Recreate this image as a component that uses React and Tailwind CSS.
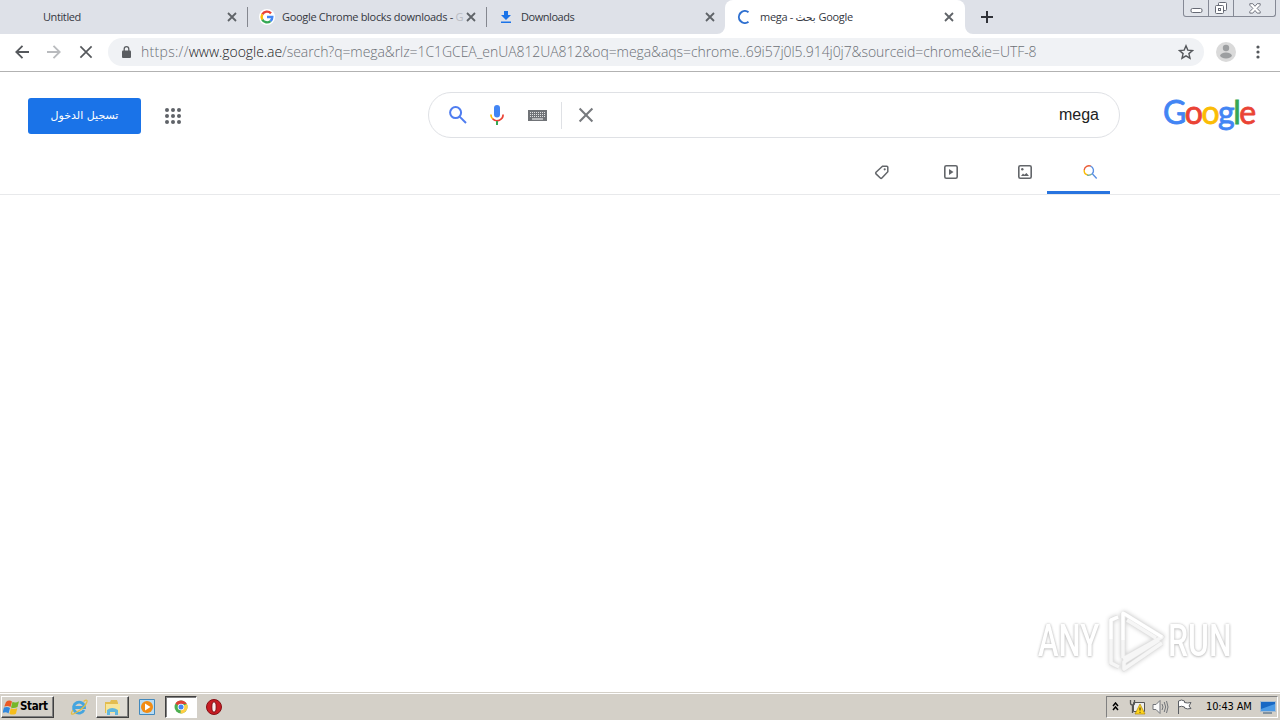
import React from "react";

const Close = ({ className = "", size = 10, width = 1.8 }) => (
  <svg className={"shrink-0 " + className} width={size} height={size} viewBox="0 0 10 10" fill="none" stroke="currentColor" strokeWidth={width}>
    <path d="M1 1l8 8M9 1l-8 8" />
  </svg>
);

const GoogleG = () => (
  <svg width="16" height="16" viewBox="0 0 16 16" className="shrink-0" fill="none" strokeWidth="2.4">
    <circle cx="8" cy="8" r="8" fill="#fff" />
    <path d="M12 4.4A5.4 5.4 0 0 0 3.3 5.4" stroke="#ea4335" />
    <path d="M3.3 5.4a5.4 5.4 0 0 0 0 5.2" stroke="#fbbc05" />
    <path d="M3.3 10.6a5.4 5.4 0 0 0 8.2 1.5" stroke="#34a853" />
    <path d="M11.5 12.1A5.4 5.4 0 0 0 13.3 8H8" stroke="#4285f4" />
  </svg>
);

const tabText = "font-[Open_Sans,Noto_Sans,sans-serif] text-[11px] leading-[16px] whitespace-nowrap";

function TabStrip() {
  return (
    <div className="flex h-[34px] w-full bg-[#dee1e8] text-[#35383f]">
      <div className="flex w-[247px] items-center pl-[43px] pr-[10px]">
        <span className={tabText + " flex-1 tracking-[-0.4px]"}>Untitled</span>
        <Close className="text-[#5f6368]" />
      </div>
      <div className="mt-[7px] h-5 w-px bg-[#84878f]" />
      <div className="flex w-[238px] items-center pl-[11px] pr-[10px]">
        <GoogleG />
        <span className={tabText + " ml-[7px] w-[180px] tracking-[-0.31px]"}>Google Chrome blocks downloads - <span className="text-[#b9bcc3]">G</span></span>
        <Close className="ml-auto text-[#5f6368]" />
      </div>
      <div className="mt-[7px] h-5 w-px bg-[#84878f]" />
      <div className="flex w-[238px] items-center pl-[14px] pr-[10px]">
        <svg width="10" height="12" viewBox="0 0 10 12" fill="#1a73e8"><path d="M3 0h4v4h3L5 9 0 4h3zM0 10.500h10V12H0z" /></svg>
        <span className={tabText + " ml-[10px] flex-1 tracking-[-0.45px]"}>Downloads</span>
        <Close className="text-[#5f6368]" />
      </div>
      <div className="relative flex w-[240px] items-center rounded-t-[8px] bg-white pl-[12px] pr-[11px]">
        <svg className="absolute bottom-0 -left-2" width="8" height="8"><path d="M8 0v8H0a8 8 0 0 0 8-8" fill="#fff" /></svg>
        <svg className="absolute bottom-0 -right-2" width="8" height="8"><path d="M0 0v8h8a8 8 0 0 1-8-8" fill="#fff" /></svg>
        <svg width="14" height="14" viewBox="0 0 14 14" fill="none" stroke="#2f70d0" strokeWidth="2"><path d="M11.500 2.200A6 6 0 1 0 11.500 11.800" /></svg>
        <span className={tabText + " ml-[9px] flex-1 tracking-[-0.3px]"}>mega - <span className="font-[DejaVu_Sans,sans-serif] text-[10.5px]">بحث</span> Google</span>
        <Close className="text-[#5f6368]" />
      </div>
      <svg className="mt-[11px] ml-[16px] text-[#303238]" width="12" height="12" viewBox="0 0 12 12" stroke="currentColor" strokeWidth="2"><path d="M6 0v12M0 6h12" /></svg>
      <div className="ml-auto mr-[4px] flex h-[17px] w-[93px] rounded-b-[3px] border border-t-0 border-[#858995] bg-[#e1e4ea] text-[#666a75]">
        <div className="flex w-[25px] justify-center border-r border-[#858995] pt-2"><svg width="13" height="5"><rect x="1" y=".5" width="11" height="4" rx="1.5" fill="#fff" stroke="currentColor" /></svg></div>
        <div className="flex w-[25px] justify-center border-r border-[#858995] pt-[2px]"><svg width="14" height="13" fill="#fff" stroke="currentColor"><rect x="4.5" y=".5" width="8" height="8" rx="1" /><rect x="1.500" y="3.500" width="8" height="8" rx="1" /><rect x="4.500" y="6.500" width="2" height="2" /></svg></div>
        <div className="flex flex-1 justify-center pt-[3px]"><svg width="12" height="11" fill="#fff" stroke="currentColor" strokeWidth=".9"><path d="M.8.7h3L6 3.300 8.200.7h3v1.500L8.100 5.400l3.100 3.200v1.500h-3L6 7.500l-2.200 2.600h-3V8.600l3.100-3.200L.8 2.200z" /></svg></div>
      </div>
    </div>
  );
}

function Toolbar() {
  return (
    <div className="flex h-[38px] w-full items-center border-b border-[#b2b2b2] bg-white pb-px pl-[15px]">
      <svg className="text-[#55585c]" width="14" height="14" viewBox="0 0 14 14" fill="none" stroke="currentColor" strokeWidth="1.8"><path d="M14 7H1.500M7.500.8L1.300 7l6.200 6.200" /></svg>
      <svg className="ml-[18px] text-[#b9bbbe]" width="14" height="14" viewBox="0 0 14 14" fill="none" stroke="currentColor" strokeWidth="1.800"><path d="M0 7h12.500M6.500.8L12.700 7l-6.200 6.200" /></svg>
      <Close className="ml-[18px] text-[#55585c]" size={14} width={1.2} />
      <div className="ml-[15px] flex h-7 w-[1096px] items-center rounded-full bg-[#f0f2f5] pl-[14px] pr-[10px]">
        <svg width="9" height="12" viewBox="0 0 9 12"><rect y="4.500" width="9" height="7.500" rx="1" fill="#5a5d61" /><path d="M2.200 5V3a2.300 2.300 0 0 1 4.600 0v2" fill="none" stroke="#5a5d61" strokeWidth="1.300" /></svg>
        <div className="ml-[10px] flex-1 whitespace-nowrap font-[Open_Sans,Noto_Sans,sans-serif] text-[14px] font-light leading-5 tracking-[-0.07px] text-[#6c7076]"><span className="tracking-[0.3px]">https://</span><span className="tracking-[-0.05px] text-[#202124]">www.google.ae</span>/search?q=mega&amp;rlz=1C1GCEA_enUA812UA812&amp;oq=mega&amp;aqs=chrome..69i57j0l5.914j0j7&amp;sourceid=chrome&amp;ie=UTF-8</div>
        <svg width="16" height="16" viewBox="0 0 16 16" fill="none" stroke="#55585c" strokeWidth="1.400"><path d="M8 1.800l1.800 4.300 4.700.4-3.600 3.100 1.100 4.600L8 11.800l-4 2.400 1.100-4.600-3.600-3.100 4.700-.4z" /></svg>
      </div>
      <svg className="ml-[12px]" width="20" height="20" viewBox="0 0 20 20"><circle cx="10" cy="10" r="10" fill="#dadada" /><circle cx="10" cy="6" r="3.200" fill="#9c9ea0" /><ellipse cx="10" cy="13.500" rx="5.800" ry="3" fill="#9c9ea0" /></svg>
      <svg className="ml-[20px]" width="4" height="14" fill="#55585c"><circle cx="2" cy="2" r="1.600" /><circle cx="2" cy="7" r="1.600" /><circle cx="2" cy="12" r="1.600" /></svg>
    </div>
  );
}

function SearchHeader() {
  return (
    <header className="flex h-[123px] flex-col border-b border-[#e8e9eb] bg-white">
      <div className="flex h-[87px] items-center pb-px">
        <button className="ml-[28px] mt-[2px] h-9 w-[113px] rounded-[3px] bg-[#1a73e8] font-[DejaVu_Sans,sans-serif] text-[11px] leading-[34px] text-white" dir="rtl"><span className="inline-block tracking-normal">تسجيل الدخول</span></button>
        <svg className="ml-[24px] mt-px" width="16" height="16" viewBox="0 0 16 16" fill="#5f6368">
          {[2, 8, 14].map((y) => [2, 8, 14].map((x) => <circle key={x + "-" + y} cx={x} cy={y} r="2" />))}
        </svg>
        <div className="ml-[247px] flex h-[46px] w-[692px] items-center rounded-full border border-[#dfe1e5] pl-[20px] pr-[20px]">
          <svg width="18" height="18" viewBox="0 0 18 18" fill="none" stroke="#4f7df0" strokeWidth="2"><circle cx="6.600" cy="6.600" r="5.500" /><path d="M10.600 10.600l6.400 6.400" /></svg>
          <svg className="ml-[23px]" width="14" height="20" viewBox="0 0 14 20" fill="none" strokeWidth="1.700"><rect x="4" y="0" width="6" height="12.500" rx="3" fill="#4285f4" /><path d="M.9 9.500A6.200 6.200 0 0 0 2.800 14" stroke="#fbbc05" /><path d="M2.700 13.900A6.100 6.100 0 0 0 13.100 9.500" stroke="#ea4335" /><path d="M7 16v4" stroke="#34a853" strokeWidth="2" /></svg>
          <svg className="ml-[24px]" width="19" height="11" viewBox="0 0 19 11"><path d="M0 0h19v11H0z" fill="#707377" />{[2, 4, 6].map((y) => <path key={y} d={`M2 ${y}.500h15`} stroke="#fff" strokeWidth=".8" strokeDasharray="1 1" />)}<path d="M4 9h11" stroke="#fff" /></svg>
          <div className="ml-[14px] h-[27px] w-px bg-[#dfe1e5]" />
          <Close className="ml-[16px] text-[#777a7e]" size={16} width={1.3} />
          <span className="ml-auto font-[Liberation_Sans,Arial,sans-serif] text-[16px] leading-6 text-[#222]">mega</span>
        </div>
        <div className="mb-[7px] ml-[43px] flex h-[42px] font-[Lato,sans-serif] text-[32px] leading-[42px] tracking-[-1.55px] text-[#4285f4] [-webkit-text-stroke:0.8px_currentColor]" aria-label="Google">
          <span>G</span><span className="text-[#ea4335]">o</span><span className="text-[#fbbc05]">o</span><span>g</span><span className="text-[#34a853]">l</span><span className="text-[#ea4335]">e</span>
        </div>
      </div>
      <nav className="flex h-[35px] text-[#63666a]">
        <svg className="ml-[874px] mt-[5px]" width="16" height="16" viewBox="0 0 16 16" fill="none" stroke="currentColor" strokeWidth="1.500"><path d="M8.500 2.300h4.300q1 0 1 1v4.400L7.900 14q-.8.800-1.600 0L2 9.900q-.7-.8 0-1.600z" /><circle cx="10.700" cy="5.300" r="1.100" fill="currentColor" stroke="none" /></svg>
        <svg className="ml-[54px] mt-[6px]" width="14" height="14" viewBox="0 0 14 14"><rect x=".8" y=".8" width="12.400" height="12.400" rx="1.500" fill="none" stroke="currentColor" strokeWidth="1.600" /><path d="M5 4v6l4.500-3z" fill="currentColor" /></svg>
        <svg className="ml-[60px] mt-[6px]" width="14" height="14" viewBox="0 0 14 14"><rect x=".8" y=".8" width="12.400" height="12.400" rx="1.500" fill="none" stroke="currentColor" strokeWidth="1.600" /><circle cx="4.300" cy="4.300" r="1.200" fill="currentColor" /><path d="M3 11l2-2.500 1.300 1.300L8.500 8l2.500 3z" fill="currentColor" /></svg>
        <div className="ml-[15px] h-[35px] w-[63px] border-b-[3px] border-[#2874df] pl-[36px] pt-[6px]">
          <svg width="15" height="15" viewBox="0 0 15 15" fill="none" strokeWidth="1.400"><path d="M1.200 5A4.800 4.800 0 0 1 8 1.200" stroke="#ea5b35" /><path d="M1.200 5A4.800 4.800 0 0 0 5 10.100" stroke="#fbbc05" /><path d="M4.200 10A4.800 4.800 0 0 0 8.800 9" stroke="#79ad9b" /><path d="M7.500 1.100A4.800 4.800 0 0 1 9.300 8.700l4.400 4.700" stroke="#5b91e4" /></svg>
        </div>
      </nav>
    </header>
  );
}

function Watermark() {
  const letters = "font-[Roboto,sans-serif] font-medium text-[45px] leading-[60px] text-white inline-block [text-shadow:0_0_3px_#bbb,0_1px_3px_#ccc] origin-left";
  return (
    <div className="ml-auto mr-[42px] flex h-[66px] w-[200px] items-center">
      <div className="w-[71px] shrink-0 whitespace-nowrap"><span className={letters + " scale-x-[0.69]"}>ANY</span></div>
      <svg className="shrink-0 drop-shadow-[0_0_2px_#ccc]" width="57" height="64" viewBox="0 0 57 64" fill="none" strokeLinejoin="round">
        <path d="M9 8L2 11V54L10 58M14 4V49M14 4L53 28L14 50M53 34L15 60V53L50 31M18 11L47 29" stroke="#e2e2e2" strokeWidth="5" />
        <path d="M9 8L2 11V54L10 58M14 4V49M14 4L53 28L14 50M53 34L15 60V53L50 31M18 11L47 29" stroke="#f6f6f6" strokeWidth="3.400" />
        <path d="M9 8L2 11V30M14 31V4L53 28" stroke="#fff" strokeWidth="3" />
      </svg>
      <div className="ml-[2px] w-[70px] shrink-0 whitespace-nowrap"><span className={letters + " scale-x-[0.71]"}>RUN</span></div>
    </div>
  );
}

function Taskbar() {
  const raised = "border border-t-white border-l-white border-r-[#404040] border-b-[#404040] shadow-[inset_-1px_-1px_0_#808080]";
  return (
    <div className="flex h-[28px] w-full border-t border-[#d4d0c8] bg-[#d4d0c8] shadow-[inset_0_1px_0_#fff] pt-[3px] font-[DejaVu_Sans_Condensed,DejaVu_Sans,sans-serif] text-black">
      <div className={"ml-[1px] flex h-[22px] w-[53px] items-center pl-px " + raised}>
        <svg className="shrink-0" width="17" height="17" viewBox="0 0 17 17"><path d="M3 3q3-2.500 6-.5L7.500 8q-2.500-2-6.200-.4z" fill="#eb5a25" /><path d="M9.500 2.800q3 1.500 6.500-.6L14.500 8Q10.500 10 8 8.400z" fill="#76b72a" /><path d="M1 8.500q3.500-1.400 6 .4l-1.500 5.500q-2.500-2-6-.5z" fill="#3188dd" /><path d="M7.800 9.300q3 1.600 6.500 0l-1.400 5.400q-3.500 1.800-6.500 0z" fill="#f5bd1b" /></svg>
        <span className="font-[DejaVu_Sans_Condensed,sans-serif] text-[11.5px] font-bold tracking-[-0.35px]">Start</span>
      </div>
      <svg className="ml-[16px] mt-[2px]" width="18" height="18" viewBox="0 0 18 18" fill="none"><path d="M14 12A5.500 5.500 0 1 1 14.500 9.500H5" stroke="#45a5df" strokeWidth="2.800" /><path d="M13.500 3.500C20-1 17 7 10 12S-1 18 3 12" stroke="#e2bd43" strokeWidth="1.200" /></svg>
      <div className={"ml-[8px] flex h-[22px] w-[33px] items-center justify-center bg-[#dedbd5] " + raised}>
        <svg width="17" height="17" viewBox="0 0 17 17"><path d="M1 3h5l1-2h6l1 3v10H1z" fill="#e3bd50" /><path d="M2 5h14v9H2z" fill="#f7e59a" /><path d="M3 16v-5q5-4 11 0v5h-3v-3H6v3z" fill="#61b7de" /></svg>
      </div>
      <svg className="ml-[10px] mt-[3px]" width="16" height="16" viewBox="0 0 16 16"><path d="M.5.5h15v15H.5z" fill="#b8dcf4" stroke="#4289bd" /><circle cx="8" cy="8" r="6" fill="#f28c13" /><path d="M6 4.500v7L11.500 8z" fill="#fff" /></svg>
      <div className="ml-[10px] flex h-[22px] w-[32px] items-center justify-center border border-t-[#404040] border-l-[#404040] border-r-white border-b-white bg-white shadow-[inset_1px_1px_0_#808080]">
        <svg width="14" height="14" viewBox="0 0 14 14"><circle cx="7" cy="7" r="6.500" fill="#4caf50" /><path d="M7 7L1.400 3.800A6.500 6.500 0 0 1 12.800 4H7z" fill="#df4135" /><path d="M7 7l5.800-3A6.500 6.500 0 0 1 6.500 13.500z" fill="#ffce43" /><circle cx="7" cy="7" r="3.300" fill="#fff" /><circle cx="7" cy="7" r="2.500" fill="#4285f4" /></svg>
      </div>
      <svg className="ml-[9px] mt-[3px]" width="16" height="16" viewBox="0 0 16 16"><circle cx="8" cy="8" r="7.500" fill="#c91c23" stroke="#851015" /><ellipse cx="8" cy="8" rx="2.200" ry="5.200" fill="#f8eeee" stroke="#7c0c10" /></svg>
      <div className="ml-auto mr-[2px] flex h-[22px] w-[172px] items-center border border-t-[#808080] border-l-[#808080] border-r-white border-b-white pl-[5px]">
        <svg className="-mt-[2px]" width="7" height="9" viewBox="0 0 7 9" fill="none" stroke="#000" strokeWidth="1.500"><path d="M1 4l2.500-3L6 4M1 8l2.500-3L6 8" /></svg>
        <svg className="ml-[10px]" width="17" height="16" viewBox="0 0 17 16"><path d="M4.500 3.500h11v9h-11z" fill="#eee" stroke="#555" /><path d="M1.500 1v3q0 2 2 2v8M5.500 1v3q0 2-2 2" stroke="#555" fill="none" strokeWidth="1.300" /><path d="M11 5l5 10H6z" fill="#ffd51c" stroke="#b18a0a" strokeWidth=".7" /><path d="M11 8.500v3m0 1.300v1" stroke="#222" /></svg>
        <svg className="ml-[6px]" width="17" height="16" viewBox="0 0 17 16" fill="none" stroke="#72757a"><path d="M1 5.500h3l4-4v13l-4-4H1z" fill="#fafafa" /><path d="M10 5q2 3 0 6M12.200 3q3 5 0 10M14.500 2q3 6 0 12" /></svg>
        <svg className="ml-[7px]" width="17" height="16" viewBox="0 0 17 16" fill="#fff" stroke="#5b5e63"><path d="M2.500 15V2q3-2 6 0v1.500q3 1 6.500 0L13 7l2 2.500q-4 1-6.500-.5V8q-3-1.500-6 0" /></svg>
        <span className="ml-[13px] whitespace-nowrap text-[11px] tracking-[-0.15px]">10:43 AM</span>
        <svg className="ml-auto mr-px" width="16" height="14" viewBox="0 0 16 14"><path d="M.5 1.500h15v10H.5z" fill="#1768c4" stroke="#a8bdd1" /><path d="M1 9L15 4v7H1z" fill="#4b9ae5" /><path d="M3 13h9" stroke="#315576" /></svg>
      </div>
    </div>
  );
}

export default function App() {
  return (
    <div className="flex h-[720px] w-[1280px] flex-col overflow-hidden bg-white">
      <TabStrip />
      <Toolbar />
      <SearchHeader />
      <main className="flex flex-1 flex-col justify-end pb-[18px]"><Watermark /></main>
      <Taskbar />
    </div>
  );
}
